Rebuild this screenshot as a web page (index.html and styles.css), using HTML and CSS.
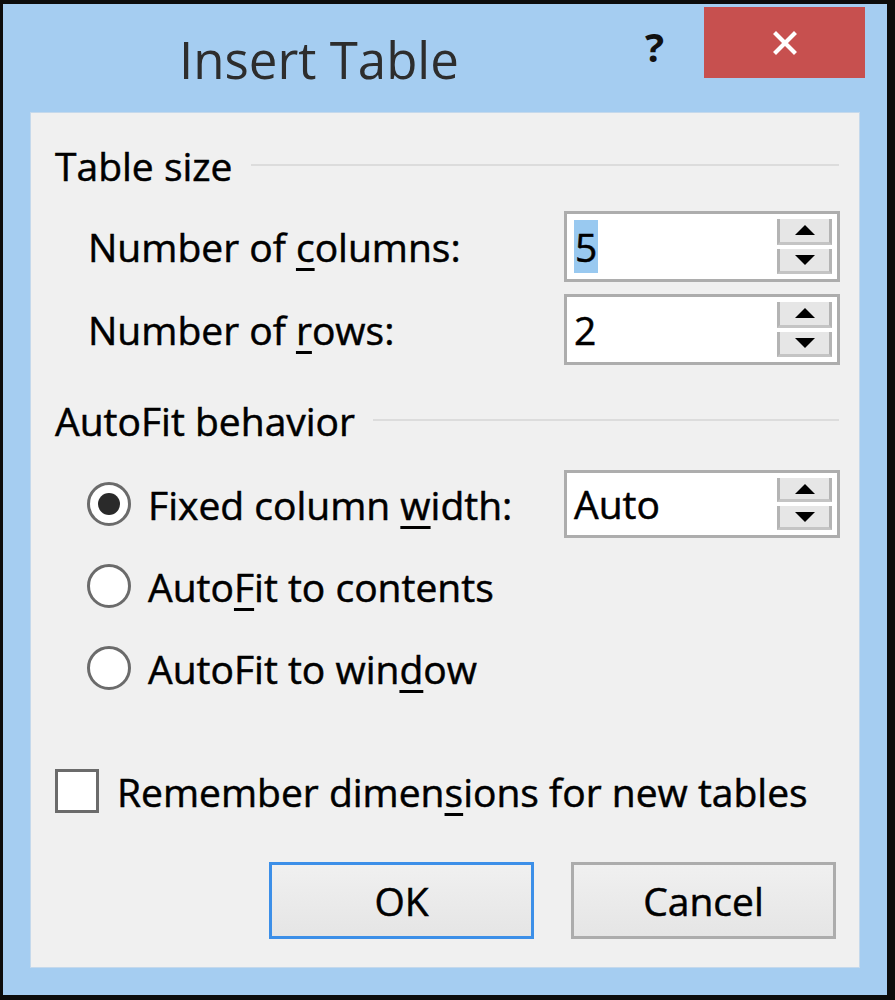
FILE: index.html
```html
<!DOCTYPE html>
<html>
<head>
<meta charset="utf-8">
<link rel="stylesheet" href="styles.css">
</head>
<body>
<div class="window">
  <div class="titlebar">
    <div class="title">Insert Table</div>
    <div class="help">?</div>
    <div class="close">
      <svg width="28" height="28" viewBox="0 0 28 28"><path d="M5 5 L23 23 M23 5 L5 23" stroke="#fff" stroke-width="4.2" stroke-linecap="square"/></svg>
    </div>
  </div>
  <div class="panel">
    <div class="group-head group-first"><span>Table size</span><div class="rule"></div></div>
    <div class="field-row row-cols">
      <span class="label">Number of <u>c</u>olumns:</span>
      <div class="spin"><span class="value"><span class="sel">5</span></span><div class="spin-btns"><div class="sb"><i class="up"></i></div><div class="sb"><i class="down"></i></div></div></div>
    </div>
    <div class="field-row row-rows">
      <span class="label">Number of <u>r</u>ows:</span>
      <div class="spin"><span class="value">2</span><div class="spin-btns"><div class="sb"><i class="up"></i></div><div class="sb"><i class="down"></i></div></div></div>
    </div>
    <div class="group-head group-second"><span>AutoFit behavior</span><div class="rule"></div></div>
    <div class="radio-row row-fixed">
      <span class="radio checked"></span>
      <span class="rlabel">Fixed column <u>w</u>idth:</span>
      <div class="spin spin-auto"><span class="value">Auto</span><div class="spin-btns"><div class="sb"><i class="up"></i></div><div class="sb"><i class="down"></i></div></div></div>
    </div>
    <div class="radio-row row-plain">
      <span class="radio"></span>
      <span class="rlabel">Auto<u>F</u>it to contents</span>
    </div>
    <div class="radio-row row-plain">
      <span class="radio"></span>
      <span class="rlabel">AutoFit to win<u>d</u>ow</span>
    </div>
    <div class="check-row">
      <span class="checkbox"></span>
      <span class="clabel">Remember dimen<u>s</u>ions for new tables</span>
    </div>
    <div class="buttons">
      <div class="btn btn-default">OK</div>
      <div class="btn">Cancel</div>
    </div>
  </div>
</div>
</body>
</html>
```
FILE: styles.css
```css
html, body {
  margin: 0;
  padding: 0;
  background: #0c0c0c;
  width: 895px;
  height: 1000px;
  overflow: hidden;
}
body {
  font-family: "Open Sans", "Noto Sans", "DejaVu Sans", sans-serif;
  color: #000;
}
.window {
  margin: 4px 0 0 3px;
  width: 884px;
  height: 991px;
  background: #a5cdf1;
  box-sizing: border-box;
  display: flex;
  flex-direction: column;
}
.titlebar {
  position: relative;
  height: 108px;
  flex: none;
}
.title {
  position: absolute;
  left: 176px;
  top: 22px;
  font-size: 51px;
  color: #2d2d2d;
  line-height: 66px;
}
.help {
  position: absolute;
  left: 642px;
  top: 18px;
  font-size: 40px;
  font-weight: 700;
  line-height: 50px;
  color: #111;
}
.close {
  position: absolute;
  left: 701px;
  top: 3px;
  width: 161px;
  height: 71px;
  background: #c7504f;
  display: flex;
  align-items: center;
  justify-content: center;
}
.panel {
  margin-left: 27px;
  width: 830px;
  height: 856px;
  background: #f0f0f0;
  box-sizing: border-box;
  border: 1px solid #c5d9ec;
  position: relative;
  font-size: 39px;
  line-height: 1;
  -webkit-text-stroke: 0.5px #000;
  display: flex;
  flex-direction: column;
}
.group-head {
  display: flex;
  align-items: center;
  height: 44px;
  padding-left: 24px;
  padding-right: 20px;
}
.group-first { margin-top: 30px; }
.group-second { margin-top: 33px; }
.rule {
  flex: 1;
  height: 2px;
  background: #dcdcdc;
  margin-left: 18px;
}
.field-row {
  display: flex;
  align-items: center;
  justify-content: space-between;
  padding-left: 57px;
  padding-right: 19px;
  height: 71px;
}
.row-cols { margin-top: 24px; }
.row-rows { margin-top: 12px; }
u { text-decoration-thickness: 3px; text-underline-offset: 6px; }
.spin {
  width: 276px;
  height: 71px;
  box-sizing: border-box;
  border: 3px solid #adadad;
  background: #fff;
  display: flex;
  align-items: center;
  justify-content: space-between;
  padding: 5px 5px 5px 7px;
}
.spin .value {
  font-size: 39px;
  line-height: 46px;
}
.sel {
  background: #99c9f0;
  padding: 0 1px;
}
.spin-btns {
  width: 55px;
  height: 100%;
  display: flex;
  flex-direction: column;
  gap: 4px;
}
.sb {
  flex: 1;
  background: #e6e6e6;
  border-left: 3px solid #b4b4b4;
  border-right: 3px solid #b4b4b4;
  border-bottom: 3px solid #c4c4c4;
  display: flex;
  align-items: center;
  justify-content: center;
}
.sb i {
  width: 0;
  height: 0;
  border-left: 10px solid transparent;
  border-right: 10px solid transparent;
}
.sb i.up { border-bottom: 10px solid #000; }
.sb i.down { border-top: 10px solid #000; }
.radio-row {
  display: flex;
  align-items: center;
  padding-left: 56px;
  padding-right: 19px;
  height: 68px;
}
.row-fixed { margin-top: 28px; }
.row-plain { margin-top: 14px; }
.radio {
  width: 44px;
  height: 44px;
  box-sizing: border-box;
  border: 3px solid #6b6b6b;
  border-radius: 50%;
  background: #fff;
  display: flex;
  align-items: center;
  justify-content: center;
  flex: none;
}
.radio.checked::after {
  content: "";
  width: 22px;
  height: 22px;
  border-radius: 50%;
  background: #2a2a2a;
}
.rlabel { margin-left: 17px; }
.spin-auto { margin-left: auto; height: 68px; }
.check-row {
  display: flex;
  align-items: center;
  padding-left: 24px;
  margin-top: 67px;
  height: 44px;
}
.checkbox {
  width: 44px;
  height: 44px;
  box-sizing: border-box;
  border: 3px solid #6b6b6b;
  background: #fff;
  flex: none;
}
.clabel { margin-left: 18px; }
.buttons {
  display: flex;
  justify-content: flex-end;
  gap: 37px;
  padding-right: 23px;
  margin-top: 49px;
}
.btn {
  width: 265px;
  height: 77px;
  box-sizing: border-box;
  border: 3px solid #acacac;
  background: linear-gradient(#f0f0f0, #e5e5e5);
  display: flex;
  align-items: center;
  justify-content: center;
  font-size: 39px;
}
.btn-default {
  border-color: #3c8fe8;
}
```
